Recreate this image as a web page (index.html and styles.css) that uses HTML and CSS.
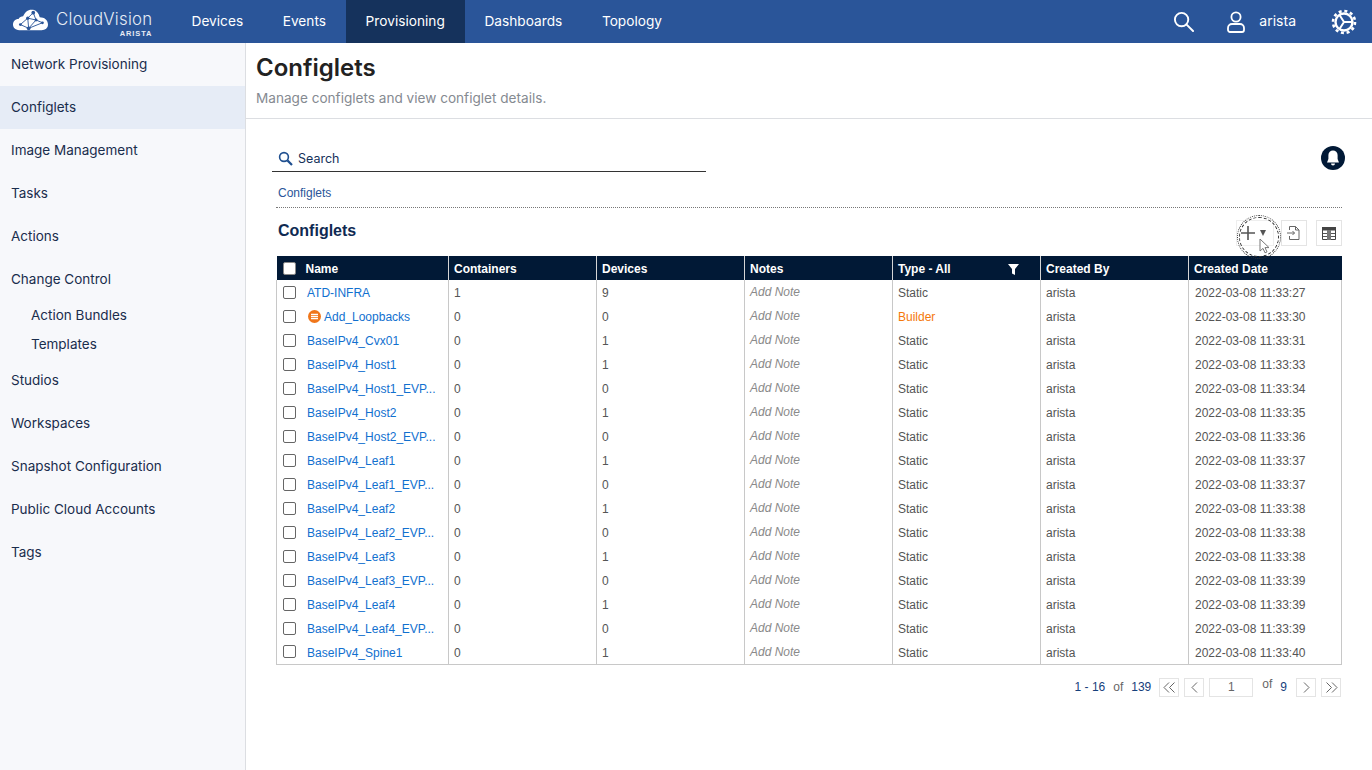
FILE: index.html
```html
<!DOCTYPE html>
<html lang="en">
<head>
<meta charset="utf-8">
<title>Configlets</title>
<link rel="stylesheet" href="styles.css">
</head>
<body>
<header class="topbar">
  <div class="logo">
    <svg class="logo-cloud" width="35" height="28" viewBox="0 0 38 30">
      <path d="M7 26C2 26 0 23 0 20c0-3 2-6 6-6 1-2 3-3 5-3 2-5 6-8 11-7 4 1 6 4 7 8 5 0 9 3 9 8 0 4-3 6-7 6z" fill="#fff"/>
      <g stroke="#2a5599" stroke-width="1" fill="none"><path d="M8 20l8-7 6-6 3 8 7 3-15 6-9-4M16 13l9 2M16 13l1 11M25 15l-8 9"/></g>
      <g fill="#2a5599"><circle cx="22" cy="7" r="2"/><circle cx="16" cy="13" r="1.8"/><circle cx="25" cy="15" r="1.6"/><circle cx="17" cy="24" r="2"/><circle cx="8" cy="20" r="1.5"/><circle cx="32" cy="18" r="1.5"/></g>
    </svg>
    <div class="logo-text"><span class="logo-name">CloudVision</span><span class="logo-sub">ARISTA</span></div>
  </div>
  <nav class="topnav">
    <a class="topnav-item">Devices</a>
    <a class="topnav-item">Events</a>
    <a class="topnav-item topnav-active">Provisioning</a>
    <a class="topnav-item">Dashboards</a>
    <a class="topnav-item">Topology</a>
  </nav>
  <div class="top-right">
    <svg class="ic-search" width="21" height="21" viewBox="0 0 22 22" fill="none" stroke="#fff" stroke-width="2"><circle cx="9" cy="9" r="7"/><path d="M14 14l7 7" stroke-linecap="round"/></svg>
    <svg class="ic-user" width="18" height="22" viewBox="0 0 18 22" fill="none" stroke="#fff" stroke-width="1.8"><circle cx="9" cy="6" r="4.6"/><path d="M5 13h8a4 4 0 0 1 4 4v2a2 2 0 0 1-2 2H3a2 2 0 0 1-2-2v-2a4 4 0 0 1 4-4z"/></svg>
    <span class="user-name">arista</span>
    <svg class="ic-gear" width="26" height="26" viewBox="0 0 26 26" fill="none" stroke="#fff"><circle cx="13" cy="13" r="8.500" stroke-width="2.400"/><circle cx="13" cy="13" r="11" stroke-width="2.600" stroke-dasharray="3 2.760"/><path d="M13 13h8M13 13l-4.500-7M13 13l-4.500 7" stroke-width="2"/></svg>
  </div>
</header>
<div class="layout">
  <aside class="sidebar">
    <a class="side-item">Network Provisioning</a>
    <a class="side-item side-active">Configlets</a>
    <a class="side-item">Image Management</a>
    <a class="side-item">Tasks</a>
    <a class="side-item">Actions</a>
    <a class="side-item">Change Control</a>
    <div class="side-sub">
      <a class="side-subitem">Action Bundles</a>
      <a class="side-subitem">Templates</a>
    </div>
    <a class="side-item">Studios</a>
    <a class="side-item">Workspaces</a>
    <a class="side-item">Snapshot Configuration</a>
    <a class="side-item">Public Cloud Accounts</a>
    <a class="side-item">Tags</a>
  </aside>
  <main class="main">
    <div class="page-head">
      <h1 class="page-title">Configlets</h1>
      <p class="page-sub">Manage configlets and view configlet details.</p>
    </div>
    <div class="content">
      <div class="search-row">
        <div class="search">
          <svg width="15" height="15" viewBox="0 0 15 15" fill="none" stroke="#1f4f8f" stroke-width="1.600"><circle cx="6" cy="6" r="4.400"/><path d="M9.400 9.400l4.600 4.600" stroke-width="2.200"/></svg>
          <span>Search</span>
        </div>
        <svg class="bell" width="24" height="24" viewBox="0 0 24 24"><circle cx="12" cy="12" r="12" fill="#011936"/><path d="M12 4.500a4.600 4.600 0 0 0-4.600 4.600v4L6 16.500h12l-1.400-3.400v-4A4.600 4.600 0 0 0 12 4.500z" fill="#fff"/><path d="M10 17.500h4a2 2 0 0 1-4 0z" fill="#fff"/></svg>
      </div>
      <div class="crumb">Configlets</div>
      <div class="title-row">
        <h2 class="section-title">Configlets</h2>
        <div class="tools">
          <div class="tool tool-add">
            <svg width="16" height="16" viewBox="0 0 16 16" stroke="#555" stroke-width="1.600"><path d="M8 1v14M1 8h14"/></svg>
            <span class="tool-caret"></span>
            <span class="click-ring"></span>
            <svg class="cursor" width="11" height="16" viewBox="0 0 11 16"><path d="M1 1v12l3-2.600 2 4.400 2-.9-2-4.300h4z" fill="#fff" stroke="#777" stroke-width="1"/></svg>
          </div>
          <div class="tool">
            <svg width="16" height="16" viewBox="0 0 16 16" fill="none" stroke="#666" stroke-width="1"><path d="M3.500 5V1.500h6l3.500 3.500v9.500H3.500V11M9.500 1.500V5H13M1 8h7.500M6.500 6l2 2-2 2"/></svg>
          </div>
          <div class="tool">
            <svg width="14" height="13" viewBox="0 0 14 13"><path d="M.5.5h13v12H.5z" fill="#fff" stroke="#444"/><path d="M0 0h14v3.500H0z" fill="#444"/><path d="M5 3h4v10H5z" fill="#777"/><path d="M1 6.500h4M1 9.500h4M9 6.500h4M9 9.500h4" stroke="#555"/></svg>
          </div>
        </div>
      </div>
      <table class="grid">
        <colgroup>
          <col class="c-name"><col class="c-mid"><col class="c-mid"><col class="c-mid"><col class="c-mid"><col class="c-mid"><col class="c-date">
        </colgroup>
        <thead>
          <tr>
            <th><span class="name-cell"><input class="check check-head" type="checkbox">Name</span></th>
            <th>Containers</th><th>Devices</th><th>Notes</th>
            <th><span class="type-head">Type - All<svg width="11" height="11" viewBox="0 0 11 11"><path d="M0 0h11L7 5v6L4 9.500V5z" fill="#fff"/></svg></span></th>
            <th>Created By</th><th>Created Date</th>
          </tr>
        </thead>
        <tbody>
          <tr><td><span class="name-cell"><input class="check" type="checkbox"><a class="link">ATD-INFRA</a></span></td><td>1</td><td>9</td><td class="note">Add Note</td><td>Static</td><td>arista</td><td>2022-03-08 11:33:27</td></tr>
          <tr><td><span class="name-cell"><input class="check" type="checkbox"><svg class="builder-ic" width="13" height="13" viewBox="0 0 13 13"><circle cx="6.500" cy="6.500" r="6.500" fill="#f0761a"/><path d="M3 4.300h7M3 6.500h7M3 8.700h7" stroke="#fff" stroke-width="1.300"/></svg><a class="link">Add_Loopbacks</a></span></td><td>0</td><td>0</td><td class="note">Add Note</td><td class="builder">Builder</td><td>arista</td><td>2022-03-08 11:33:30</td></tr>
          <tr><td><span class="name-cell"><input class="check" type="checkbox"><a class="link">BaseIPv4_Cvx01</a></span></td><td>0</td><td>1</td><td class="note">Add Note</td><td>Static</td><td>arista</td><td>2022-03-08 11:33:31</td></tr>
          <tr><td><span class="name-cell"><input class="check" type="checkbox"><a class="link">BaseIPv4_Host1</a></span></td><td>0</td><td>1</td><td class="note">Add Note</td><td>Static</td><td>arista</td><td>2022-03-08 11:33:33</td></tr>
          <tr><td><span class="name-cell"><input class="check" type="checkbox"><a class="link">BaseIPv4_Host1_EVP...</a></span></td><td>0</td><td>0</td><td class="note">Add Note</td><td>Static</td><td>arista</td><td>2022-03-08 11:33:34</td></tr>
          <tr><td><span class="name-cell"><input class="check" type="checkbox"><a class="link">BaseIPv4_Host2</a></span></td><td>0</td><td>1</td><td class="note">Add Note</td><td>Static</td><td>arista</td><td>2022-03-08 11:33:35</td></tr>
          <tr><td><span class="name-cell"><input class="check" type="checkbox"><a class="link">BaseIPv4_Host2_EVP...</a></span></td><td>0</td><td>0</td><td class="note">Add Note</td><td>Static</td><td>arista</td><td>2022-03-08 11:33:36</td></tr>
          <tr><td><span class="name-cell"><input class="check" type="checkbox"><a class="link">BaseIPv4_Leaf1</a></span></td><td>0</td><td>1</td><td class="note">Add Note</td><td>Static</td><td>arista</td><td>2022-03-08 11:33:37</td></tr>
          <tr><td><span class="name-cell"><input class="check" type="checkbox"><a class="link">BaseIPv4_Leaf1_EVP...</a></span></td><td>0</td><td>0</td><td class="note">Add Note</td><td>Static</td><td>arista</td><td>2022-03-08 11:33:37</td></tr>
          <tr><td><span class="name-cell"><input class="check" type="checkbox"><a class="link">BaseIPv4_Leaf2</a></span></td><td>0</td><td>1</td><td class="note">Add Note</td><td>Static</td><td>arista</td><td>2022-03-08 11:33:38</td></tr>
          <tr><td><span class="name-cell"><input class="check" type="checkbox"><a class="link">BaseIPv4_Leaf2_EVP...</a></span></td><td>0</td><td>0</td><td class="note">Add Note</td><td>Static</td><td>arista</td><td>2022-03-08 11:33:38</td></tr>
          <tr><td><span class="name-cell"><input class="check" type="checkbox"><a class="link">BaseIPv4_Leaf3</a></span></td><td>0</td><td>1</td><td class="note">Add Note</td><td>Static</td><td>arista</td><td>2022-03-08 11:33:38</td></tr>
          <tr><td><span class="name-cell"><input class="check" type="checkbox"><a class="link">BaseIPv4_Leaf3_EVP...</a></span></td><td>0</td><td>0</td><td class="note">Add Note</td><td>Static</td><td>arista</td><td>2022-03-08 11:33:39</td></tr>
          <tr><td><span class="name-cell"><input class="check" type="checkbox"><a class="link">BaseIPv4_Leaf4</a></span></td><td>0</td><td>1</td><td class="note">Add Note</td><td>Static</td><td>arista</td><td>2022-03-08 11:33:39</td></tr>
          <tr><td><span class="name-cell"><input class="check" type="checkbox"><a class="link">BaseIPv4_Leaf4_EVP...</a></span></td><td>0</td><td>0</td><td class="note">Add Note</td><td>Static</td><td>arista</td><td>2022-03-08 11:33:39</td></tr>
          <tr><td><span class="name-cell"><input class="check" type="checkbox"><a class="link">BaseIPv4_Spine1</a></span></td><td>0</td><td>1</td><td class="note">Add Note</td><td>Static</td><td>arista</td><td>2022-03-08 11:33:40</td></tr>
        </tbody>
      </table>
      <div class="pager">
        <span class="pg-num">1 - 16</span><span class="pg-of">of</span><span class="pg-num pg-total">139</span>
        <span class="pg-btn"><svg width="13" height="11" viewBox="0 0 13 11" fill="none" stroke="#666"><path d="M6 .5l-5 5 5 5M11.500.5l-5 5 5 5"/></svg></span>
        <span class="pg-btn"><svg width="7" height="11" viewBox="0 0 7 11" fill="none" stroke="#666"><path d="M6 .5l-5 5 5 5"/></svg></span>
        <span class="pg-input">1</span>
        <span class="pg-of pg-of2">of</span><span class="pg-num pg-pages">9</span>
        <span class="pg-btn"><svg width="7" height="11" viewBox="0 0 7 11" fill="none" stroke="#666"><path d="M1 .5l5 5-5 5"/></svg></span>
        <span class="pg-btn"><svg width="13" height="11" viewBox="0 0 13 11" fill="none" stroke="#666"><path d="M1.500.5l5 5-5 5M7 .5l5 5-5 5"/></svg></span>
      </div>
    </div>
  </main>
</div>
</body>
</html>
```
FILE: styles.css
```css
* { box-sizing: border-box; }
html, body { margin: 0; padding: 0; height: 100%; }
body { font-family: "Inter", "Liberation Sans", sans-serif; background: #fff; color: #222; overflow: hidden; width: 1372px; height: 770px; }

.topbar { height: 43px; background: #2a5599; display: flex; align-items: stretch; color: #fff; }
.logo { width: 192px; flex: none; display: flex; align-items: center; padding-left: 13px; gap: 8px; }
.logo-cloud { flex: none; margin-top: -3px; }
.logo-text { display: flex; flex-direction: column; align-items: flex-end; line-height: 1; margin-top: 5px; }
.logo-name { font-size: 16.800px; line-height: 17px; font-weight: 300; color: #e6ecf5; letter-spacing: .25px; }
.logo-sub { font-family: "Liberation Sans", sans-serif; font-size: 7.500px; line-height: 8px; font-weight: 700; margin-top: 2px; color: #e6ecf5; letter-spacing: .9px; }
.topnav { display: flex; margin-left: -20.300px; }
.topnav-item { display: flex; align-items: center; padding: 0 19.800px 2px; font-size: 13.700px; color: #fff; }
.topnav-active { background: #15325c; }
.top-right { margin-left: auto; display: flex; align-items: center; padding-right: 15px; }
.ic-search { margin-right: 33px; }
.ic-user { margin-right: 14px; }
.user-name { font-size: 14px; margin-right: 35px; margin-top: -2px; }

.layout { display: flex; height: 727px; }
.sidebar { width: 246px; flex: none; background: #f7f8fb; border-right: 1px solid #dcdee2; display: flex; flex-direction: column; }
.side-item { height: 43px; display: flex; align-items: center; padding: 0 0 2px 11px; font-size: 13.500px; color: #1a2d4d; flex: none; }
.side-active { background: #e6ecf6; }
.side-sub { display: flex; flex-direction: column; }
.side-subitem { height: 29px; display: flex; align-items: center; padding: 0 0 2px 31px; font-size: 13.500px; color: #1a2d4d; }

.main { flex: 1; min-width: 0; }
.page-head { height: 76px; border-bottom: 1px solid #dcdee2; padding: 10px 0 0 10px; }
.page-title { margin: 0; font-size: 24px; line-height: 30px; font-weight: 600; color: #222; }
.page-sub { margin: 6px 0 0; font-size: 13.600px; line-height: 18px; color: #858a91; }

.content { padding: 0 30px; font-family: "Liberation Sans", sans-serif; font-size: 12px; }
.search-row { display: flex; justify-content: space-between; align-items: center; height: 52px; }
.search { width: 434px; height: 26px; margin-left: -4px; margin-top: 28px; border-bottom: 1px solid #333; display: flex; align-items: center; gap: 5px; padding-left: 6px; font-family: "Inter", sans-serif; font-size: 12.500px; color: #16315a; }
.bell { margin-top: 25px; margin-right: -3px; }
.crumb { margin-top: 15px; height: 22px; line-height: 15px; padding-left: 2px; color: #2a5599; border-bottom: 1px dotted #777; }
.title-row { height: 48px; display: flex; justify-content: space-between; }
.section-title { margin: 14px 0 0 2px; font-size: 16px; line-height: 18px; font-weight: 700; color: #0f2a52; }
.tools { display: flex; gap: 9px; margin-top: 12px; }
.tool { width: 26px; height: 26px; border: 1px solid #e4e4e4; display: flex; align-items: center; justify-content: center; position: relative; }
.tool-add { width: 38px; justify-content: flex-start; padding-left: 3px; margin-right: -2px; border-color: #eee; }
.tool-caret { width: 0; height: 0; margin-left: 4px; border-left: 3.500px solid transparent; border-right: 3.500px solid transparent; border-top: 6px solid #555; }
.click-ring { position: absolute; left: 2px; top: -4px; width: 40px; height: 40px; border-radius: 50%; border: 1px dashed #333; outline: 1px dotted #333; outline-offset: 1px; }
.cursor { position: absolute; left: 22px; top: 17px; }

.grid { width: 1065px; border-collapse: collapse; table-layout: fixed; border-bottom: 1px solid #c8c8c8; }
.c-name { width: 172px; }
.c-mid { width: 148px; }
.c-date { width: 153px; }
.grid th { height: 24px; padding: 2px 5px 0; background: #011936; color: #fff; font-weight: 700; text-align: left; border-right: 1px solid #d5d5d5; }
.grid th:last-child { border-right: 0; }
.grid td { height: 24px; padding: 2px 5px 0; color: #555; border-right: 1px solid #c8c8c8; white-space: nowrap; }
.grid td:first-child { border-left: 1px solid #c8c8c8; }
.grid td:last-child { padding-left: 6px; }
.name-cell { display: flex; align-items: center; }
.check { appearance: none; width: 13px; height: 13px; margin: -2px 11px 0 1px; background: #fff; border: 1px solid #666; border-radius: 2px; flex: none; }
.check-head { margin-right: 10px; border-color: #888; }
.link { color: #1170cf; white-space: nowrap; }
.builder-ic { flex: none; margin: -2px 3px 0 1px; }
.grid .note { font-style: italic; color: #8a8a8a; padding: 0 5px; }
.grid .builder { color: #f5780a; }
.type-head { display: flex; justify-content: space-between; align-items: center; padding-right: 16px; }

.pager { display: flex; align-items: center; justify-content: flex-end; height: 45px; padding-right: 1px; font-size: 12px; }
.pg-num { color: #16407c; }
.pg-of { color: #666; margin: 0 8px; }
.pg-total { margin-right: 8px; }
.pg-btn { width: 20px; height: 19px; border: 1px solid #e4e4e4; display: flex; align-items: center; justify-content: center; margin-right: 5px; }
.pg-btn:last-child { margin-right: 0; }
.pg-input { width: 44px; height: 19px; border: 1px solid #e4e4e4; text-align: center; line-height: 17px; color: #666; }
.pg-of2 { margin: -6px 8px 0 9px; }
.pg-pages { margin-right: 9px; }
```
